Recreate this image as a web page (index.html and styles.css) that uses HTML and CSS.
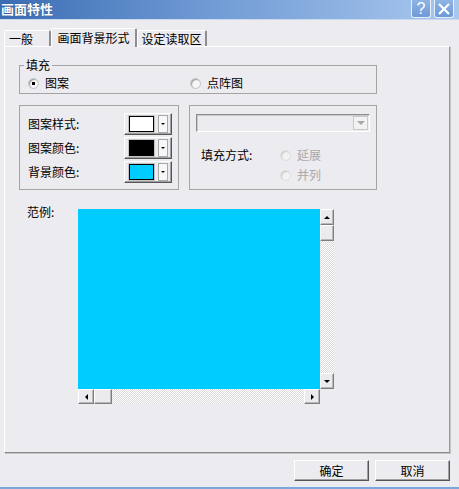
FILE: index.html
```html
<!DOCTYPE html>
<html lang="zh">

<head>
    <meta charset="UTF-8">
    <title>画面特性</title>
    <link rel="stylesheet" href="styles.css">
</head>

<body>
    <div class="win">
        <div class="titlebar">
            <span class="title">画面特性</span>
            <div class="title-btns">
                <span class="tbtn">?</span>
                <span class="tbtn">
                    <svg width="14" height="14" viewBox="0 0 14 14"><path d="M2 2L12 12M12 2L2 12" stroke="#fff" stroke-width="2.2" /></svg>
                </span>
            </div>
        </div>

        <ul class="tabs">
            <li class="tab t1">一般</li>
            <li class="tab t2 active">画面背景形式</li>
            <li class="tab t3">设定读取区</li>
        </ul>

        <div class="panel">
            <fieldset class="fill">
                <legend>填充</legend>
                <div class="fill-row">
                    <label class="radio r-pattern"><i class="dot on"></i>图案</label>
                    <label class="radio"><i class="dot"></i>点阵图</label>
                </div>
            </fieldset>

            <div class="groups">
                <div class="group g-left">
                    <div class="crow">
                        <span>图案样式:</span>
                        <span class="cbtn"><b class="sw" style="background:#fff"></b><em class="drop"></em></span>
                    </div>
                    <div class="crow">
                        <span>图案颜色:</span>
                        <span class="cbtn"><b class="sw" style="background:#000"></b><em class="drop"></em></span>
                    </div>
                    <div class="crow">
                        <span>背景颜色:</span>
                        <span class="cbtn"><b class="sw" style="background:#00ccff"></b><em class="drop"></em></span>
                    </div>
                </div>
                <div class="group g-right">
                    <div class="combo"><span class="combo-btn"></span></div>
                    <div class="mode">
                        <span class="mode-label">填充方式:</span>
                        <label class="radio off"><i class="dot"></i>延展</label>
                        <span></span>
                        <label class="radio off"><i class="dot"></i>并列</label>
                    </div>
                </div>
            </div>

            <div class="sample">
                <span class="sample-label">范例:</span>
                <div class="view">
                    <div class="canvas"></div>
                    <div class="vbar">
                        <span class="sbtn up"></span>
                        <span class="sbtn thumb-v"></span>
                        <span class="track"></span>
                        <span class="sbtn down"></span>
                    </div>
                    <div class="hbar">
                        <span class="sbtn left"></span>
                        <span class="sbtn thumb-h"></span>
                        <span class="track"></span>
                        <span class="sbtn right"></span>
                    </div>
                    <div class="corner"></div>
                </div>
            </div>
        </div>

        <div class="footer">
            <button class="btn">确定</button>
            <button class="btn">取消</button>
        </div>
    </div>
</body>

</html>
```

FILE: styles.css
```css
* {
    margin: 0;
    padding: 0;
    list-style: none;
    font-style: normal;
    box-sizing: border-box;
}

body {
    background: #ecebef;
    font: 12px/14px "Noto Sans CJK SC", "Liberation Sans", sans-serif;
    color: #000;
}

.win {
    width: 459px;
    height: 489px;
    border-bottom: 2px solid #7aa6dc;
    overflow: hidden;
}

/* title bar */
.titlebar {
    height: 20px;
    display: flex;
    justify-content: space-between;
    align-items: flex-start;
    padding: 0 5px 0 1px;
    background: linear-gradient(to right, #3b6db3, #6f9ad4 45%, #a9c8ee);
    border-bottom: 1px solid #c9d8ec;
}

.title {
    color: #fff;
    font-weight: bold;
    font-size: 13px;
    line-height: 17px;
    text-shadow: 0 0 1px #1c3d75;
}

.title-btns {
    display: flex;
    gap: 3px;
}

.tbtn {
    width: 20px;
    height: 18px;
    border: 1px solid #e6eef9;
    border-top: 0;
    border-radius: 0 0 3px 3px;
    background: linear-gradient(#8fb3e4, #6d9ad8);
    color: #fff;
    font: 16px/17px "Liberation Sans", sans-serif;
    text-align: center;
    display: flex;
    justify-content: center;
    align-items: center;
}

/* tabs */
.tabs {
    display: flex;
    align-items: flex-end;
    height: 26px;
    padding-left: 4px;
}

.tab {
    height: 16px;
    border-top: 1px solid #fff;
    border-left: 1px solid #fff;
    border-right: 2px solid #8e8e8e;
    text-align: center;
    line-height: 15px;
    border-radius: 2px 2px 0 0;
}

.t1 {
    width: 47px;
    text-align: left;
    padding-left: 4px;
}

.t2 {
    width: 86px;
}

.t3 {
    width: 70px;
}

.tab.active {
    height: 19px;
    margin-bottom: -1px;
    background: #ecebef;
    position: relative;
    z-index: 1;
    line-height: 17px;
}

/* panel */
.panel {
    margin-left: 4px;
    width: 446px;
    height: 407px;
    border-top: 1px solid #fff;
    border-left: 1px solid #fff;
    border-right: 1px solid #9a9a9a;
    border-bottom: 1px solid #8a8a8a;
    box-shadow: 1px 1px 0 #c4c4c4;
    padding: 11px 0 0 14px;
}

.fill {
    width: 358px;
    border: 1px solid #a4a4a4;
    padding: 4px 0 3px 4px;
}

.fill legend {
    padding: 0 2px;
    line-height: 14px;
}

.fill-row {
    display: flex;
    height: 14px;
    padding-left: 4px;
}

.radio {
    display: flex;
    align-items: center;
    gap: 6px;
}

.r-pattern {
    width: 162px;
}

.dot {
    width: 11px;
    height: 11px;
    border-radius: 50%;
    background: #f6f6f6;
    border: 1px solid #c2c2c2;
    box-shadow: inset 1px 1px 1px #9c9c9c;
    display: flex;
    justify-content: center;
    align-items: center;
}

.dot.on::after {
    content: "";
    width: 3px;
    height: 3px;
    background: #000;
}

.radio.off {
    color: #a9a9a9;
}

.radio.off .dot {
    border-color: #dedede;
    box-shadow: inset 1px 1px 1px #c8c8c8;
    background: #f2f2f2;
}

/* middle groups */
.groups {
    display: flex;
    gap: 10px;
    margin-top: 11px;
}

.group {
    height: 85px;
    border: 1px solid #a4a4a4;
}

.g-left {
    width: 160px;
    padding: 7px 6px 0 8px;
}

.crow {
    display: flex;
    justify-content: space-between;
    align-items: center;
    height: 22px;
    margin-bottom: 2px;
}

.cbtn {
    width: 48px;
    height: 22px;
    display: flex;
    align-items: center;
    padding-left: 4px;
    border-top: 1px solid #fff;
    border-left: 1px solid #fff;
    border-right: 1px solid #555;
    border-bottom: 1px solid #555;
    box-shadow: inset -1px -1px 0 #a0a0a0;
    background: #eceaee;
}

.sw {
    width: 25px;
    height: 16px;
    border: 1px solid #000;
    box-shadow: 0 0 0 1px #c4c4c4;
}

.drop {
    width: 10px;
    height: 18px;
    margin-left: 4px;
    border: 1px solid #a8a8a8;
    background: #f7f7f7;
    display: flex;
    justify-content: center;
    align-items: center;
}

.drop::after {
    content: "";
    border: 2px solid transparent;
    border-top: 2px solid #000;
    margin-top: 2px;
}

.g-right {
    width: 188px;
    padding: 8px 0 0 6px;
}

.combo {
    width: 174px;
    height: 18px;
    border-top: 1px solid #8c8c8c;
    border-left: 1px solid #8c8c8c;
    border-right: 1px solid #fff;
    border-bottom: 1px solid #fff;
    box-shadow: inset 1px 1px 0 #c8c8c8;
    display: flex;
    justify-content: flex-end;
    padding: 1px;
}

.combo-btn {
    width: 15px;
    height: 14px;
    border: 1px solid #c8c8c8;
    background: #f2f2f2;
    display: flex;
    justify-content: center;
    align-items: center;
}

.combo-btn::after {
    content: "";
    border: 4px solid transparent;
    border-top: 4px solid #a8a8a8;
    margin-top: 4px;
}

.mode {
    display: grid;
    grid-template-columns: 79px auto;
    grid-auto-rows: 20px;
    align-items: center;
    margin-top: 13px;
    padding-left: 5px;
}

/* sample */
.sample {
    display: flex;
    margin-top: 15px;
    padding-left: 8px;
}

.sample-label {
    width: 51px;
}

.view {
    display: grid;
    grid-template-columns: 242px 14px;
    grid-template-rows: 180px 15px;
    margin-top: 4px;
}

.canvas {
    background: #00ccff;
}

.vbar {
    display: flex;
    flex-direction: column;
}

.hbar {
    display: flex;
}

.track {
    flex: 1;
    background: repeating-conic-gradient(#fff 0 25%, #d9d9d9 0 50%) 0 0 / 2px 2px;
}

.sbtn {
    flex: none;
    border-top: 1px solid #fff;
    border-left: 1px solid #fff;
    border-right: 1px solid #7e7e7e;
    border-bottom: 1px solid #7e7e7e;
    box-shadow: inset -1px -1px 0 #b8b8b8;
    background: #ebeaee;
    display: flex;
    justify-content: center;
    align-items: center;
}

.vbar .sbtn {
    height: 16px;
}

.hbar .sbtn {
    width: 16px;
}

.hbar .thumb-h {
    width: 18px;
}

.up::after {
    content: "";
    border: 3px solid transparent;
    border-bottom: 3px solid #000;
    margin-top: -3px;
}

.down::after {
    content: "";
    border: 3px solid transparent;
    border-top: 3px solid #000;
    margin-top: 3px;
}

.left::after {
    content: "";
    border: 3px solid transparent;
    border-right: 3px solid #000;
    margin-left: -3px;
}

.right::after {
    content: "";
    border: 3px solid transparent;
    border-left: 3px solid #000;
    margin-left: 3px;
}

/* footer */
.footer {
    display: flex;
    justify-content: flex-end;
    gap: 6px;
    padding: 7px 9px 0 0;
}

.btn {
    width: 75px;
    height: 21px;
    font: 12px/14px "Noto Sans CJK SC", "Liberation Sans", sans-serif;
    color: #000;
    background: #ecebef;
    border-top: 1px solid #fff;
    border-left: 1px solid #fff;
    border-right: 1px solid #555;
    border-bottom: 1px solid #555;
    box-shadow: inset -1px -1px 0 #a0a0a0;
}
```
